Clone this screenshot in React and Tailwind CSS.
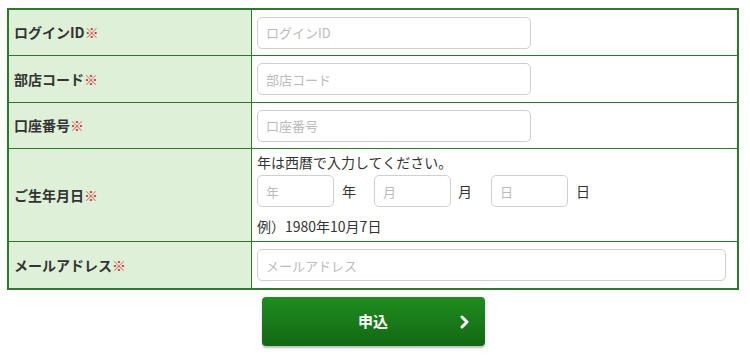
import React from 'react';

const labelCls = "w-[243px] shrink-0 bg-[#dff0d8] border-r border-[#2b7a2b] flex items-center pl-[5px] text-[14px] font-bold text-[#333]";
const inputCls = "h-[32px] rounded-[5px] border border-[#cfcfcf] bg-white px-[8px] text-[13px] text-[#333] placeholder:text-[#bbbbbb] outline-none";

function Label({ children }) {
  return (
    <div className={labelCls}>
      {children}
      <span className="text-[#d9262c]">※</span>
    </div>
  );
}

export default function App() {
  return (
    <div className="w-[750px] h-[358px] bg-white pt-[8px] pl-[7px] font-['Meiryo','Noto_Sans_CJK_JP',sans-serif] text-[#333]">
      <div className="w-[732px] border-2 border-[#2b7a2b]">
        {/* ログインID */}
        <div className="flex h-[45px]">
          <Label>ログインID</Label>
          <div className="flex items-center pl-[5px]">
            <input className={`${inputCls} w-[274px]`} placeholder="ログインID" />
          </div>
        </div>

        <div className="flex h-[47px] border-t border-[#2b7a2b]">
          <Label>部店コード</Label>
          <div className="flex items-center pl-[5px]">
            <input className={`${inputCls} w-[274px]`} placeholder="部店コード" />
          </div>
        </div>

        <div className="flex h-[46px] border-t border-[#2b7a2b]">
          <Label>口座番号</Label>
          <div className="flex items-center pl-[5px]">
            <input className={`${inputCls} w-[274px]`} placeholder="口座番号" />
          </div>
        </div>

        {/* 生年月日 */}
        <div className="flex h-[93px] border-t border-[#2b7a2b]">
          <Label>ご生年月日</Label>
          <div className="flex flex-col pl-[5px] pt-[3px] text-[14px]">
            <div className="h-[20px] leading-[20px]">年は西暦で入力してください。</div>
            <div className="flex items-center mt-[3px]">
              <input className={`${inputCls} w-[77px]`} placeholder="年" />
              <span className="ml-[8px] mr-[18px]">年</span>
              <input className={`${inputCls} w-[77px]`} placeholder="月" />
              <span className="ml-[7px] mr-[19px]">月</span>
              <input className={`${inputCls} w-[77px]`} placeholder="日" />
              <span className="ml-[8px]">日</span>
            </div>
            <div className="mt-[9px] h-[20px] leading-[20px]">例）1980年10月7日</div>
          </div>
        </div>

        <div className="flex h-[47px] border-t border-[#2b7a2b]">
          <Label>メールアドレス</Label>
          <div className="flex items-center pl-[5px]">
            <input className={`${inputCls} w-[469px]`} placeholder="メールアドレス" />
          </div>
        </div>
      </div>

      <div className="w-[732px] flex justify-center mt-[7px]">
        <button className="relative w-[223px] h-[49px] rounded-[4px] bg-gradient-to-b from-[#1f8d1f] to-[#136813] shadow-[0_2px_2px_rgba(0,0,0,0.25)] text-white text-[15px] font-bold flex items-center justify-center">
          申込
          <svg className="absolute right-[15px] top-1/2 -translate-y-1/2" width="10" height="14" viewBox="0 0 10 14">
            <polyline points="2,2 7,7 2,12" fill="none" stroke="white" strokeWidth="3" strokeLinecap="round" strokeLinejoin="round" />
          </svg>
        </button>
      </div>
    </div>
  );
}
